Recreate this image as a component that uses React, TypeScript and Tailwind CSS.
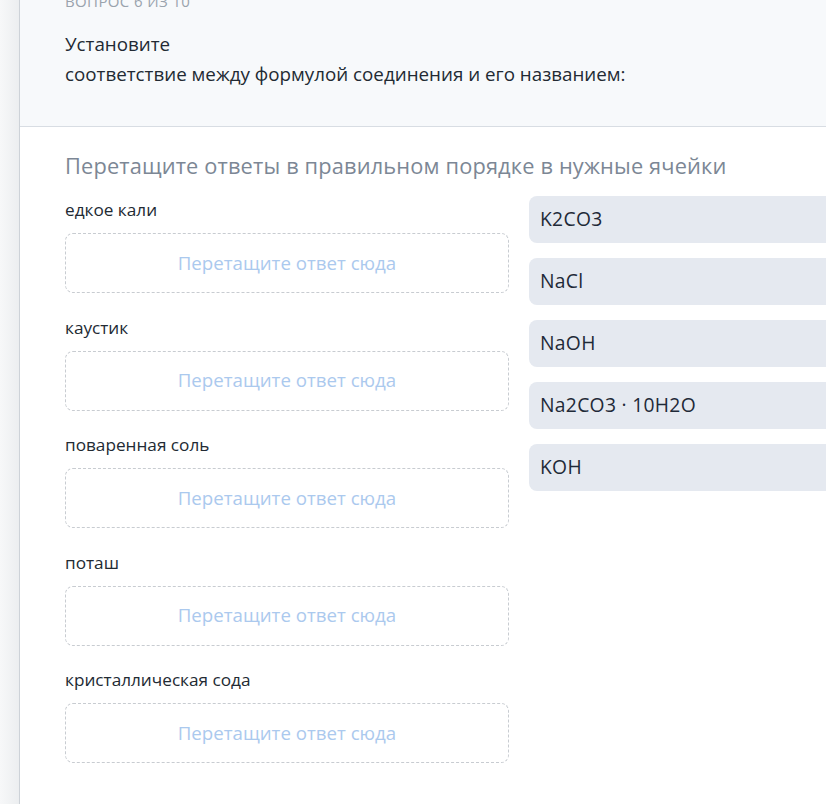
import React from 'react'

const pairs = ['едкое кали', 'каустик', 'поваренная соль', 'поташ', 'кристаллическая сода']
const answers = ['K2CO3', 'NaCl', 'NaOH', 'Na2CO3 · 10H2O', 'KOH']

export default function App() {
  return (
    <div className="flex h-[804px] w-[826px] overflow-hidden bg-white font-['Open_Sans',sans-serif]">
      <div className="w-[20px] shrink-0 border-r border-[#cdd2d8] bg-gradient-to-r from-[#f7f8f9] to-[#eceef0]" />

      <div className="flex min-w-0 flex-1 flex-col">
        {/* question header */}
        <div className="border-b border-[#d8dde3] bg-[#f7f9fb] pb-[37px] pl-[45px]">
          <div className="-mt-[9px] h-5 text-[15px] uppercase leading-5 tracking-wide text-[#9aa3ad]">
            Вопрос 6 из 10
          </div>
          <p className="mt-[18px] text-[18.8px] leading-[30px] text-[#222a33]">
            Установите
            <br />
            соответствие между формулой соединения и его названием:
          </p>
        </div>

        <div className="pl-[45px] pt-[25px]">
          <h2 className="text-[21.8px] font-medium leading-[28px] tracking-[0.15px] text-[#7c8795]">
            Перетащите ответы в правильном порядке в нужные ячейки
          </h2>

          <div className="mt-[16px] flex gap-[20px]">
            <div className="flex w-[444px] shrink-0 flex-col gap-[20.5px]">
              {pairs.map((label) => (
                <div key={label}>
                  <div className="text-[17.2px] leading-[28px] text-[#222a33]">{label}</div>
                  <div className="mt-[9px] flex h-[60px] items-center justify-center rounded-lg border border-dashed border-[#c8ccd1]">
                    <span className="text-[18.7px] text-[#abc9ee]">Перетащите ответ сюда</span>
                  </div>
                </div>
              ))}
            </div>

            <div className="flex min-w-0 flex-1 flex-col gap-[15px]">
              {answers.map((a) => (
                <div
                  key={a}
                  className="-mr-[20px] flex h-[47px] items-center rounded-l-lg bg-[#e5e9f0] pl-[11px] text-[19.3px] tracking-[0.3px] text-[#1f2a38]"
                >
                  {a}
                </div>
              ))}
            </div>
          </div>
        </div>
      </div>
    </div>
  )
}
